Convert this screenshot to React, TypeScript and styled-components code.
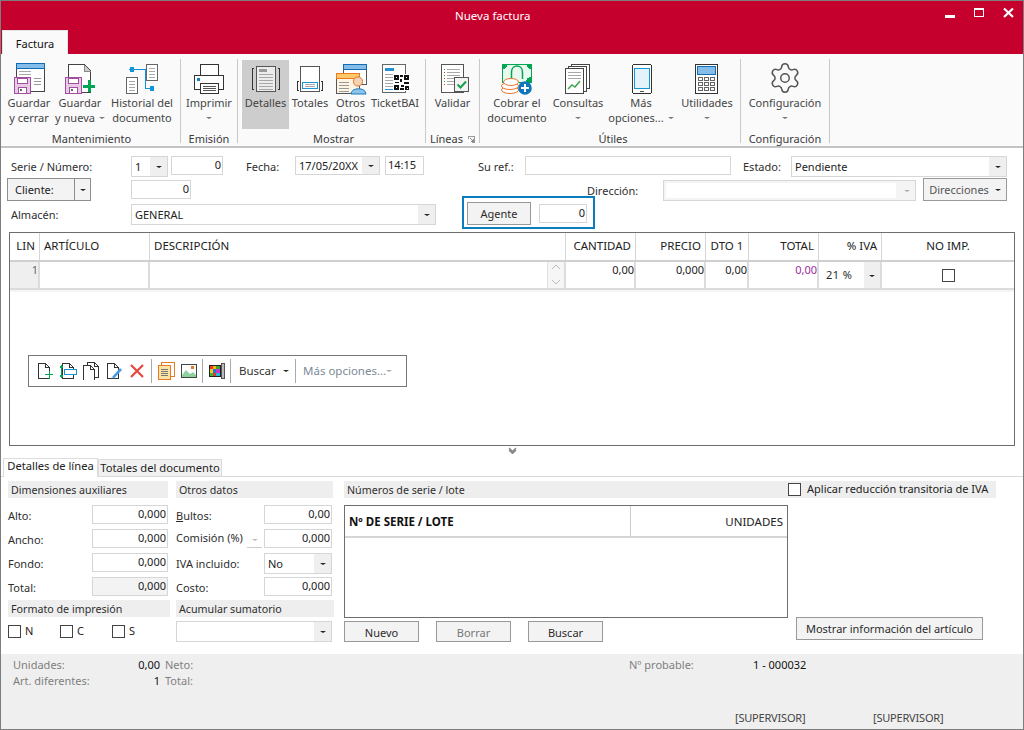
import React from "react";
import styled, { createGlobalStyle } from "styled-components";
import { Settings } from "lucide-react";

const Global = createGlobalStyle`
  html, body { margin: 0; padding: 0; width: 1024px; height: 730px; overflow: hidden; background: #fff; }
  * { box-sizing: border-box; }
  body { font-family: "Noto Sans", "Open Sans", sans-serif; font-size: 11px; color: #2b2b2b; }
`;

const Win = styled.div`
  width: 1024px; height: 730px; border: 1px solid #7d7d7d; display: flex; flex-direction: column; background: #fff;
`;
const TitleBar = styled.header`
  height: 53px; flex: none; background: #c6002d; display: flex; flex-direction: column; position: relative;
`;
const TitleRow = styled.div`
  display: grid; grid-template-columns: 454px auto 1fr; height: 29px; align-items: start; color: #fff;
`;
const TitleText = styled.div`
  grid-column: 2; font-size: 11.5px; line-height: 29px; color: #fff;
`;
const Controls = styled.div`
  grid-column: 3; justify-self: end; display: flex; gap: 19px; padding: 6px 9px 0 0;
`;
const TabRow = styled.div` display: flex; padding-left: 1px; height: 24px; `;
const RibbonTab = styled.div`
  width: 66px; height: 24px; background: #fafafa; border: 1px solid #e4e4e4; border-bottom: 0; text-align: center; line-height: 25px; color: #111; font-size: 11px;
`;

const Ribbon = styled.nav`
  height: 94px; flex: none; background: #fafafa; border-bottom: 2px solid #c4c4c4; display: flex; padding-top: 5px;
`;
const Group = styled.section<{ $w: number; $pl?: number }>`
  width: ${p => p.$w}px; height: 84px; flex: none; border-right: 1px solid #c9c9c9; padding-left: ${p => p.$pl ?? 0}px;
  display: flex; flex-direction: column;
`;
const GroupBtns = styled.div` display: flex; height: 72px; flex: none; `;
const GroupLabel = styled.div`
  line-height: 16px; text-align: center; color: #3a3a3a; white-space: nowrap; display: flex; justify-content: center; align-items: center; gap: 5px;
`;
const RibbonBtn = styled.button<{ $w: number; $on?: boolean }>`
  all: unset; box-sizing: border-box; width: ${p => p.$w}px; height: 69px; margin-top: 1px; flex: none; display: flex; flex-direction: column; align-items: center;
  background: ${p => (p.$on ? "#cdcdcd" : "transparent")}; color: #444; font-size: 11px; line-height: 15px; text-align: center; white-space: nowrap;
  svg { flex: none; margin-bottom: -1px; }
`;
const BtnLine = styled.span` display: flex; align-items: center; justify-content: center; gap: 4px; height: 15px; `;
const Caret = styled.i<{ $c?: string; $s?: number }>`
  display: inline-block; width: 0; height: 0; flex: none;
  border-left: ${p => p.$s ?? 3}px solid transparent; border-right: ${p => p.$s ?? 3}px solid transparent; border-top: ${p => (p.$s ?? 3) - 0.5}px solid ${p => p.$c ?? "#777"};
`;

const FormArea = styled.section`
  height: 84px; flex: none; padding: 8px 0 0 6px; display: flex; flex-direction: column;
`;
const FormRow = styled.div<{ $h: number }>` display: flex; height: ${p => p.$h}px; align-items: flex-start; `;
const Lbl = styled.label<{ $w: number; $ml?: number; $lh?: number; $pl?: number }>`
  width: ${p => p.$w}px; flex: none; margin-left: ${p => p.$ml ?? 0}px; padding-left: ${p => p.$pl ?? 0}px; line-height: ${p => p.$lh ?? 22}px; color: #2e2e2e; white-space: nowrap;
`;
const Field = styled.div<{ $w: number; $h?: number; $ml?: number; $mt?: number; $left?: boolean; $bg?: string }>`
  width: ${p => p.$w}px; height: ${p => p.$h ?? 19}px; flex: none; margin-left: ${p => p.$ml ?? 0}px; margin-top: ${p => p.$mt ?? 0}px;
  border: 1px solid #d6d6d6; background: ${p => p.$bg ?? "#fff"}; color: #222; padding: 0 1px 0 2px; line-height: 15px; text-align: ${p => (p.$left ? "left" : "right")}; white-space: nowrap;
`;
const Sel = styled.div<{ $w: number; $h?: number; $ml?: number; $mt?: number; $arrow?: number; $off?: boolean }>`
  width: ${p => p.$w}px; height: ${p => p.$h ?? 21}px; flex: none; margin-left: ${p => p.$ml ?? 0}px; margin-top: ${p => p.$mt ?? 0}px;
  border: 1px solid #d6d6d6; background: ${p => (p.$off ? "#f4f4f4" : "#fff")}; display: flex; color: #222;
  span { flex: 1; padding-left: 3px; line-height: ${p => (p.$h ?? 21) - 2}px; margin: ${p => (p.$off ? "2px" : "0")}; background: #fff; }
  b { width: ${p => p.$arrow ?? 17}px; flex: none; background: ${p => (p.$off ? "#f4f4f4" : "#efefef")}; display: flex; align-items: center; justify-content: center; }
`;
const MiniSel = styled.div`
  width: 15px; height: 19px; margin-right: 2px; flex: none; border-bottom: 1px solid #ccc; display: flex; align-items: center; justify-content: center; padding-top: 3px;
`;
const PlainBtn = styled.button<{ $w: number; $h: number; $ml?: number; $mt?: number; $off?: boolean; $soft?: boolean; $pt?: number; $gap?: number }>`
  all: unset; box-sizing: border-box; width: ${p => p.$w}px; height: ${p => p.$h}px; flex: none; margin-left: ${p => p.$ml ?? 0}px; margin-top: ${p => p.$mt ?? 0}px; padding-top: ${p => p.$pt ?? 0}px;
  border: 1px solid #999; background: #f3f3f3; color: ${p => (p.$off ? "#777" : p.$soft ? "#555" : "#2b2b2b")}; text-align: center; line-height: 15px; white-space: nowrap;
  display: flex; align-items: center; justify-content: center; gap: ${p => p.$gap ?? 7}px; font-size: 11px;
`;
const SplitBtn = styled.div`
  width: 84px; height: 23px; flex: none; border: 1px solid #8e8e8e; background: #f3f3f3; display: flex; line-height: 21px; color: #222;
  span { width: 67px; padding-left: 7px; border-right: 1px solid #8e8e8e; }
  b { flex: 1; display: flex; align-items: center; justify-content: center; }
`;
const Highlight = styled.div`
  width: 133px; height: 33px; margin: -6px 0 0 26px; flex: none; border: 2px solid #0a7dbf; display: flex; align-items: flex-start; padding: 4px 0 0 3px; background: #fff;
`;

const TableBox = styled.section`
  height: 214px; flex: none; margin: 0 8px; width: 1006px; border: 1px solid #6e6e6e; position: relative;
`;
const Cols = "30px 110px 416px 70px 70px 43px 70px 63px 132px";
const HeadRow = styled.div`
  display: grid; grid-template-columns: ${Cols}; height: 29px; border-bottom: 2px solid #cfcfcf;
`;
const Th = styled.div<{ $a?: string }>`
  border-right: 1px solid #d6d6d6; text-align: ${p => p.$a ?? "right"}; padding: 0 4px 0 4px; line-height: 25px; color: #222; font-size: 11.5px; white-space: nowrap;
  &:last-child { border-right: 0; }
`;
const DataRow = styled.div`
  display: grid; grid-template-columns: ${Cols}; height: 28px; border-bottom: 2px solid #dcdcdc; box-shadow: 0 2px 0 #f5f5f5;
`;
const Td = styled.div<{ $bg?: string; $c?: string }>`
  border-right: 2px solid #dcdcdc; background: ${p => p.$bg ?? "#fff"}; color: ${p => p.$c ?? "#222"}; text-align: right; padding-right: 0; line-height: 16px; white-space: nowrap;
  &:last-child { border-right: 0; }
`;
const DescCell = styled.div`
  display: flex; border-right: 2px solid #dcdcdc;
  div:first-child { width: 398px; border-right: 1px solid #e0e0e0; }
  div:last-child { flex: 1; background: #f6f6f6; display: flex; align-items: center; justify-content: center; }
`;
const IvaCell = styled.div`
  display: flex; border-right: 2px solid #dcdcdc;
  span { flex: 1; padding: 5px 0 0 7px; line-height: 15px; letter-spacing: 0.4px; }
  b { width: 16px; background: #efefef; display: flex; align-items: center; justify-content: center; padding-top: 2px; }
`;
const CheckCell = styled.div` display: flex; align-items: center; justify-content: center; padding: 1px 0 0 0; `;
const Check = styled.i` display: block; width: 13px; height: 13px; border: 1px solid #444; background: #fff; flex: none; `;

const FloatBar = styled.div`
  position: absolute; left: 18px; top: 122px; width: 379px; height: 32px; background: #fff; border: 1px solid #777; display: flex; align-items: center; padding-left: 4px;
`;
const ToolBtn = styled.span` width: 23px; height: 18px; display: flex; justify-content: center; flex: none; `;
const ToolSep = styled.i<{ $l?: number; $r?: number }>` width: 1px; height: 24px; background: #aaa; margin: 0 ${p => p.$r ?? 2}px 0 ${p => p.$l ?? 2}px; flex: none; `;
const ToolText = styled.span<{ $w: number; $pl: number; $off?: boolean }>`
  width: ${p => p.$w}px; flex: none; padding-left: ${p => p.$pl}px; display: flex; align-items: center; justify-content: space-between; padding-right: 6px; white-space: nowrap;
  color: ${p => (p.$off ? "#7b8a96" : "#333")}; line-height: 15px; font-size: 11.5px; height: 15px; margin-top: -2px;
  i { margin-top: 2px; }
`;

const Collapse = styled.div` height: 12px; flex: none; display: flex; justify-content: center; align-items: flex-start; padding-top: 1px; `;
const DetailTabs = styled.div`
  height: 19px; flex: none; border-bottom: 1px solid #d8d8d8; display: flex; align-items: flex-end; padding-left: 2px;
`;
const DetailTab = styled.div<{ $on?: boolean }>`
  height: ${p => (p.$on ? 19 : 17)}px; width: ${p => (p.$on ? 95 : 124)}px; border: 1px solid #dcdcdc; border-bottom: 0; background: ${p => (p.$on ? "#fff" : "#f1f1f1")};
  line-height: ${p => (p.$on ? 14 : 16)}px; text-align: center; color: #222; margin-bottom: ${p => (p.$on ? -1 : 0)}px; white-space: nowrap; position: relative; font-size: 11.2px;
`;

const Panels = styled.section` flex: 1; display: flex; padding: 4px 0 0 7px; `;
const Col = styled.div<{ $w: number; $ml?: number }>` width: ${p => p.$w}px; margin-left: ${p => p.$ml ?? 0}px; flex: none; display: flex; flex-direction: column; `;
const SectionHead = styled.div<{ $wide?: number }>`
  height: 17px; flex: none; background: #eeeeee; padding: 1px 3px 0; line-height: 16px; color: #2e2e2e; width: ${p => (p.$wide ? `${p.$wide}px` : "100%")}; white-space: nowrap; display: flex; align-items: center; justify-content: space-between; font-size: 10.7px;
`;
const Stack = styled.div` display: flex; flex-direction: column; gap: 5px; margin: 7px 0 4px; `;
const PanelRow = styled.div` display: flex; height: 19px; align-items: flex-start; `;
const CheckRow = styled.div` display: flex; margin-top: 7px; `;
const CheckItem = styled.label<{ $w?: number; $gap?: number; $fs?: number; $mt?: number }>`
  width: ${p => p.$w ?? 52}px; display: flex; align-items: center; gap: ${p => p.$gap ?? 4}px; line-height: 14px; color: #222; white-space: nowrap; font-size: ${p => p.$fs ?? 11}px; margin-top: ${p => p.$mt ?? 0}px;
`;
const SeriesBody = styled.div` display: flex; margin-top: 7px; height: 137px; `;
const SeriesLeft = styled.div` width: 444px; flex: none; display: flex; flex-direction: column; `;
const SeriesTable = styled.div` height: 113px; border: 1px solid #6e6e6e; flex: none; `;
const SeriesHead = styled.div`
  display: grid; grid-template-columns: 286px 1fr; height: 32px; border-bottom: 2px solid #d6d6d6; line-height: 31px;
`;
const SeriesTh = styled.div<{ $bold?: boolean }>`
  padding: 0 4px; font-size: 11.5px; font-weight: ${p => (p.$bold ? 700 : 400)}; text-align: ${p => (p.$bold ? "left" : "right")}; color: ${p => (p.$bold ? "#111" : "#222")}; border-right: ${p => (p.$bold ? "1px solid #ccc" : "0")};
`;
const SeriesBtns = styled.div` display: flex; gap: 17px; margin-top: 3px; `;

const Footer = styled.footer`
  height: 75px; flex: none; background: #efefef; display: flex; flex-direction: column; padding: 3px 0 4px 12px;
`;
const FootTop = styled.div` display: flex; `;
const FootGrid = styled.div<{ $cols: string; $ml?: number }>`
  display: grid; grid-template-columns: ${p => p.$cols}; margin-left: ${p => p.$ml ?? 0}px; line-height: 16px; align-content: start;
`;
const Muted = styled.span` color: #808080; white-space: nowrap; `;
const Val = styled.span<{ $r?: boolean }>` color: #111; text-align: ${p => (p.$r ? "right" : "left")}; white-space: nowrap; `;
const FootBottom = styled.div` margin-top: auto; display: flex; padding-left: 722px; `;
const Who = styled.span` width: 138px; color: #444; line-height: 14px; white-space: nowrap; letter-spacing: -0.2px; `;

/* ---------- icons ---------- */
const Ico: React.FC<{ children: React.ReactNode }> = ({ children }) => (
  <svg width="40" height="36" viewBox="0 0 40 36" fill="none" shapeRendering="crispEdges">{children}</svg>
);
const Floppy = () => (
  <g>
    <rect x="5.5" y="17.5" width="16" height="16" fill="#e9c9e6" stroke="#a04fa0" />
    <rect x="8.5" y="18" width="10" height="5.5" fill="#fff" stroke="#a04fa0" />
    <rect x="9.5" y="27.5" width="8" height="6" fill="#fff" stroke="#a04fa0" />
    <rect x="11" y="29" width="2" height="2" fill="#666" />
  </g>
);
const DocLines: React.FC<{ x: number; y: number; w: number; n: number; gap?: number; c?: string }> = ({ x, y, w, n, gap = 3, c = "#a8a8a8" }) => (
  <g>{Array.from({ length: n }).map((_, i) => <rect key={i} x={x} y={y + i * gap} width={w} height="1" fill={c} />)}</g>
);
const IconSaveClose = () => (
  <Ico>
    <rect x="7.5" y="3.5" width="28" height="28" fill="#fff" stroke="#444" />
    <rect x="7.5" y="3.5" width="28" height="5" fill="#86bde8" stroke="#0f6cb5" />
    <DocLines x={10} y={11} w={12} n={2} gap={3} />
    <rect x="25" y="18" width="7" height="1" fill="#999" /><rect x="25" y="21" width="7" height="1" fill="#999" /><rect x="25" y="24" width="7" height="1" fill="#999" />
    <Floppy />
  </Ico>
);
const IconSaveNew = () => (
  <Ico>
    <path d="M8.5 4.5H24.5L30.5 11V32H8.5Z" fill="#fff" stroke="#444" />
    <path d="M24.5 4.5V11H30.5" fill="#ccc" stroke="#888" />
    <Floppy />
    <rect x="23" y="24.5" width="12" height="3" fill="#00a651" /><rect x="27.5" y="20" width="3" height="12" fill="#00a651" />
  </Ico>
);
const IconHistory = () => (
  <Ico>
    <path d="M10 9.5H23.5V28.5H30" stroke="#1195d8" />
    <circle cx="10" cy="9.5" r="2.5" fill="#1195d8" /><circle cx="30" cy="28.5" r="2.5" fill="#1195d8" />
    <rect x="24.5" y="4.5" width="11" height="16" fill="#fff" stroke="#666" /><DocLines x={27} y={8} w={6} n={4} />
    <rect x="4.5" y="17.5" width="11" height="16" fill="#fff" stroke="#666" /><DocLines x={7} y={21} w={6} n={4} />
  </Ico>
);
const IconPrint = () => (
  <Ico>
    <rect x="11.5" y="4.5" width="18" height="11" fill="#fff" stroke="#333" />
    <rect x="5.5" y="15.5" width="29" height="14" fill="#fff" stroke="#333" />
    <rect x="8" y="18" width="3" height="3" fill="#0f7cc4" />
    <rect x="11.5" y="23.5" width="18" height="10" fill="#fff" stroke="#333" /><DocLines x={14} y={26} w={13} n={3} gap={2} c="#555" />
  </Ico>
);
const Brackets: React.FC<{ y: number; h: number; l: number; r: number }> = ({ y, h, l, r }) => (
  <g stroke="#333">
    <path d={`M${l + 2} ${y + 0.5}H${l + 0.5}V${y + h - 0.5}H${l + 2}`} />
    <path d={`M${r - 2} ${y + 0.5}H${r - 0.5}V${y + h - 0.5}H${r - 2}`} />
  </g>
);
const IconDetails = () => (
  <Ico>
    <Brackets y={8} h={22} l={6} r={34} />
    <rect x="10.5" y="6.5" width="19" height="25" fill="#ececec" stroke="#555" />
    <rect x="13" y="9" width="8" height="3" fill="#999" /><DocLines x={13} y={14} w={14} n={6} />
  </Ico>
);
const IconTotals = () => (
  <Ico>
    <Brackets y={21} h={10} l={7} r={33} />
    <rect x="10.5" y="6.5" width="19" height="25" fill="#fff" stroke="#555" />
    <rect x="12.5" y="22.5" width="15" height="6" fill="#fff" stroke="#1795d5" /><DocLines x={15} y={24} w={10} n={2} gap={2} />
  </Ico>
);
const IconOther = () => (
  <Ico>
    <rect x="12.5" y="4.5" width="23" height="20" fill="#fff" stroke="#555" />
    <rect x="12.5" y="4.5" width="23" height="4.5" fill="#86bde8" stroke="#0f6cb5" />
    <rect x="5.5" y="13.5" width="23" height="20" fill="#fdf4e3" stroke="#555" />
    <rect x="5.5" y="13.5" width="23" height="4.5" fill="#fbc96a" stroke="#ea7a22" />
    <DocLines x={8} y={22} w={10} n={4} c="#999" />
    <g shapeRendering="auto">
      <path d="M20 34C20 27 35 27 35 34Z" fill="#8ec4ec" stroke="#1a7abf" />
      <circle cx="27" cy="21.5" r="4.6" fill="#f6d2b0" stroke="#d87a3a" />
    </g>
  </Ico>
);
const IconTicket = () => (
  <Ico>
    <rect x="7.5" y="4.5" width="23" height="28" fill="#fff" stroke="#666" />
    <rect x="10" y="8" width="9" height="3" fill="#2a8fd0" /><DocLines x={10} y={14} w={8} n={5} /><rect x="10" y="29" width="8" height="1" fill="#2a8fd0" />
    <rect x="18" y="14" width="17" height="17" fill="#fff" />
    <g fill="#111">
      <path d="M19 15h5v5h-5zM29 15h5v5h-5zM19 25h5v5h-5z" fillRule="evenodd" />
      <rect x="25" y="15" width="3" height="2" /><rect x="25" y="19" width="2" height="3" /><rect x="29" y="22" width="5" height="2" /><rect x="20" y="22" width="4" height="1" />
      <rect x="26" y="25" width="3" height="2" /><rect x="30" y="26" width="4" height="4" /><rect x="25" y="28" width="4" height="2" />
    </g>
    <g fill="#fff"><rect x="21" y="17" width="1" height="1" /><rect x="31" y="17" width="1" height="1" /><rect x="21" y="27" width="1" height="1" /><rect x="32" y="28" width="1" height="1" /></g>
  </Ico>
);
const IconValidate = () => (
  <Ico>
    <rect x="8.5" y="4.5" width="22" height="28" fill="#fff" stroke="#555" />
    <DocLines x={14} y={9} w={13} n={6} />
    <g>{[9, 12, 15, 18, 21, 24].map((y, i) => <rect key={y} x="11" y={y} width="1" height="1" fill={i % 2 ? "#c33" : "#2a2"} />)}</g>
    <rect x="21.5" y="17.5" width="14" height="14" fill="#f3f3f3" stroke="#555" />
    <path d="M24.5 24.5L27.5 27.5L33 21.5" stroke="#15a04a" strokeWidth="2" shapeRendering="auto" />
  </Ico>
);
const IconCharge = () => (
  <Ico>
    <rect x="5.5" y="4.5" width="29" height="18" fill="#eaf8ef" stroke="#00a651" />
    <path d="M5.5 9.5a5 5 0 0 0 5-5h-5zM34.5 9.5a5 5 0 0 1-5-5h5zM29 22a5 5 0 0 1 5-5v5z" fill="#00a651" />
    <path d="M14.5 19V12C14.5 4 25.5 4 25.5 12V19" stroke="#00a651" strokeWidth="1.5" shapeRendering="auto" />
    <g stroke="#e8762c" fill="#fff" shapeRendering="auto">
      <ellipse cx="13" cy="30" rx="8.5" ry="3.5" /><ellipse cx="13" cy="26" rx="8.5" ry="3.5" /><ellipse cx="14" cy="22" rx="7.5" ry="3.5" />
    </g>
    <circle cx="28" cy="28" r="6.8" fill="#0f76bd" shapeRendering="auto" />
    <rect x="24" y="27.3" width="8" height="1.5" fill="#fff" /><rect x="27.3" y="24" width="1.5" height="8" fill="#fff" />
  </Ico>
);
const IconQueries = () => (
  <Ico>
    <rect x="13.5" y="4.5" width="18" height="24" fill="#fff" stroke="#444" />
    <rect x="10.5" y="6.5" width="18" height="25" fill="#fff" stroke="#444" />
    <rect x="7.5" y="8.5" width="18" height="25" fill="#fff" stroke="#444" />
    <DocLines x={10} y={12} w={13} n={3} />
    <path d="M10 29L14 25L17 27L22 21" stroke="#3aa84a" strokeWidth="1.5" shapeRendering="auto" />
  </Ico>
);
const IconPhone = () => (
  <Ico>
    <rect x="11.5" y="4.5" width="19" height="29" rx="2" fill="#fff" stroke="#333" />
    <rect x="13.5" y="8.5" width="15" height="20" fill="#e4f2fb" stroke="#1795d5" />
    <rect x="19" y="31" width="4" height="1" fill="#555" />
  </Ico>
);
const IconCalc = () => (
  <Ico>
    <rect x="8.5" y="4.5" width="22" height="29" fill="#fff" stroke="#333" />
    <rect x="10.5" y="6.5" width="18" height="8" fill="#86bde8" stroke="#0f6cb5" />
    {[17, 22, 27].map(y => [11, 17, 23].map(x => <rect key={`${x}-${y}`} x={x + 0.5} y={y + 0.5} width="4" height="3" stroke="#666" fill="#fff" />))}
  </Ico>
);
const IconGear = () => (
  <svg width="40" height="36" viewBox="0 0 40 36" fill="none">
    <Settings x={3} y={1} width={34} height={34} strokeWidth={1.05} color="#555" />
  </svg>
);
const Mini: React.FC<{ children: React.ReactNode }> = ({ children }) => (
  <svg width="18" height="18" viewBox="0 0 18 18" fill="none" shapeRendering="crispEdges">{children}</svg>
);
const MiniDoc: React.FC<{ x?: number; y?: number }> = ({ x = 0, y = 0 }) => (
  <path d={`M${x + 2.5} ${y + 1.5}H${x + 9.5}L${x + 13.5} ${y + 5.5}V${y + 16.5}H${x + 2.5}ZM${x + 9.5} ${y + 1.5}V${y + 5.5}H${x + 13.5}`} stroke="#333" fill="#fff" />
);
const TNew = () => <Mini><MiniDoc /><rect x="9" y="12" width="8" height="1" fill="#00a651" /><rect x="12.5" y="8.5" width="1" height="8" fill="#00a651" /></Mini>;
const TInsert = () => <Mini><MiniDoc x={1} /><path d="M2.5 4V15M1 5.5L2.5 3.5L4 5.5M1 13.5L2.5 15.5L4 13.5" stroke="#00a651" /><rect x="5.5" y="7.5" width="12" height="5" fill="#fff" stroke="#1795d5" /></Mini>;
const TCopy = () => <Mini><MiniDoc x={3} y={-1} /><MiniDoc x={-1} y={2} /></Mini>;
const TEdit = () => <Mini><MiniDoc /><path d="M7 15L15 6L17 8L9 16.5Z" fill="#4a9be0" shapeRendering="auto" /></Mini>;
const TDelete = () => <Mini><path d="M3 3L15 15M15 3L3 15" stroke="#e8473f" strokeWidth="2.2" shapeRendering="auto" /></Mini>;
const TNotes = () => <Mini><rect x="4.5" y="0.5" width="13" height="14" fill="#fff" stroke="#ea7a22" /><rect x="1.5" y="3.5" width="12" height="14" fill="#fbe3a8" stroke="#ea7a22" /><DocLines x={4} y={7} w={7} n={4} gap={2} c="#777" /></Mini>;
const TImage = () => <Mini><rect x="1.5" y="2.5" width="15" height="13" fill="#fff" stroke="#444" /><path d="M2 13L6 8L10 12L13 10L16 13V15H2Z" fill="#8fd19e" shapeRendering="auto" /><rect x="11" y="4" width="3" height="3" fill="#ea7a22" /></Mini>;
const TColors = () => (
  <Mini>
    <rect x="1" y="3" width="12" height="12" fill="#222" />
    <rect x="2" y="4" width="3" height="3" fill="#e33" /><rect x="5" y="4" width="3" height="3" fill="#fb0" /><rect x="8" y="4" width="4" height="3" fill="#3a3" />
    <rect x="2" y="7" width="3" height="4" fill="#ec2" /><rect x="5" y="7" width="3" height="4" fill="#27c" /><rect x="8" y="7" width="4" height="4" fill="#c3c" />
    <rect x="2" y="11" width="3" height="3" fill="#3b3" /><rect x="5" y="11" width="3" height="3" fill="#e33" /><rect x="8" y="11" width="4" height="3" fill="#2bd" />
    <rect x="13.5" y="1.5" width="3" height="15" fill="#bbb" stroke="#555" />
  </Mini>
);
const GroupCorner = () => (
  <svg width="7" height="7" viewBox="0 0 7 7" fill="none" shapeRendering="crispEdges"><path d="M0.5 3V0.5H6.5V6.5H3.5" stroke="#999" /><path d="M2 2L5 5M5 3V5H3" stroke="#888" /></svg>
);

const Arrow = () => <Caret $c="#222" />;

const RBtn: React.FC<{ w: number; on?: boolean; icon: React.ReactNode; l1: React.ReactNode; l2?: React.ReactNode }> = ({ w, on, icon, l1, l2 }) => (
  <RibbonBtn $w={w} $on={on}>
    {icon}
    <BtnLine>{l1}</BtnLine>
    {l2 !== undefined && <BtnLine>{l2}</BtnLine>}
  </RibbonBtn>
);

export default function App() {
  return (
    <Win>
      <Global />
      <TitleBar>
        <TitleRow>
          <TitleText>Nueva factura</TitleText>
          <Controls>
            <svg width="10" height="11" viewBox="0 0 10 11" shapeRendering="crispEdges"><rect y="8" width="10" height="3" fill="#fff" /></svg>
            <svg width="10" height="11" viewBox="0 0 10 11" fill="none" shapeRendering="crispEdges"><rect x="0.5" y="1.5" width="9" height="8" stroke="#fff" /><rect y="1" width="10" height="2" fill="#fff" /></svg>
            <svg width="11" height="11" viewBox="0 0 11 11" fill="none"><path d="M1 1.5L10 10M10 1.5L1 10" stroke="#fff" strokeWidth="2.2" /></svg>
          </Controls>
        </TitleRow>
        <TabRow><RibbonTab>Factura</RibbonTab></TabRow>
      </TitleBar>

      <Ribbon>
        <Group $w={180} $pl={2}>
          <GroupBtns>
            <RBtn w={52} icon={<IconSaveClose />} l1="Guardar" l2="y cerrar" />
            <RBtn w={50} icon={<IconSaveNew />} l1="Guardar" l2={<>y nueva <Caret /></>} />
            <RBtn w={74} icon={<IconHistory />} l1="Historial del" l2="documento" />
          </GroupBtns>
          <GroupLabel>Mantenimiento</GroupLabel>
        </Group>
        <Group $w={57}>
          <GroupBtns><RBtn w={56} icon={<IconPrint />} l1="Imprimir" l2={<Caret />} /></GroupBtns>
          <GroupLabel>Emisión</GroupLabel>
        </Group>
        <Group $w={188} $pl={4}>
          <GroupBtns>
            <RBtn w={47} on icon={<IconDetails />} l1="Detalles" />
            <RBtn w={42} icon={<IconTotals />} l1="Totales" />
            <RBtn w={39} icon={<IconOther />} l1="Otros" l2="datos" />
            <RBtn w={50} icon={<IconTicket />} l1="TicketBAI" />
          </GroupBtns>
          <GroupLabel>Mostrar</GroupLabel>
        </Group>
        <Group $w={54}>
          <GroupBtns><RBtn w={53} icon={<IconValidate />} l1="Validar" /></GroupBtns>
          <GroupLabel>Líneas <GroupCorner /></GroupLabel>
        </Group>
        <Group $w={261} $pl={6}>
          <GroupBtns>
            <RBtn w={62} icon={<IconCharge />} l1="Cobrar el" l2="documento" />
            <RBtn w={60} icon={<IconQueries />} l1="Consultas" l2={<Caret />} />
            <RBtn w={66} icon={<IconPhone />} l1="Más" l2={<>opciones... <Caret /></>} />
            <RBtn w={66} icon={<IconCalc />} l1="Utilidades" l2={<Caret />} />
          </GroupBtns>
          <GroupLabel>Útiles</GroupLabel>
        </Group>
        <Group $w={89}>
          <GroupBtns><RBtn w={88} icon={<IconGear />} l1="Configuración" l2={<Caret />} /></GroupBtns>
          <GroupLabel>Configuración</GroupLabel>
        </Group>
      </Ribbon>

      <FormArea>
        <FormRow $h={22}>
          <Lbl $w={124} $pl={4}>Serie / Número:</Lbl>
          <Sel $w={37} $h={21}><span>1</span><b><Arrow /></b></Sel>
          <Field $w={52} $ml={3}>0</Field>
          <Lbl $w={49} $ml={23}>Fecha:</Lbl>
          <Sel $w={85} $h={19}><span>17/05/20XX</span><b><Arrow /></b></Sel>
          <Field $w={39} $ml={5} $left>14:15</Field>
          <Lbl $w={47} $ml={54}>Su ref.:</Lbl>
          <Field $w={206} />
          <Lbl $w={48} $ml={12}>Estado:</Lbl>
          <Sel $w={216}><span>Pendiente</span><b><Arrow /></b></Sel>
        </FormRow>
        <FormRow $h={24}>
          <SplitBtn><span>Cliente:</span><b><Arrow /></b></SplitBtn>
          <Field $w={60} $ml={40} $mt={2}>0</Field>
          <Lbl $w={76} $ml={396} $lh={26}>Dirección:</Lbl>
          <Sel $w={253} $mt={2} $off><span /><b><Caret $c="#aaa" /></b></Sel>
          <PlainBtn $w={84} $h={23} $ml={7} $soft $gap={6}>Direcciones <Arrow /></PlainBtn>
        </FormRow>
        <FormRow $h={27}>
          <Lbl $w={124} $pl={4} $lh={26}>Almacén:</Lbl>
          <Sel $w={305} $mt={2}><span>GENERAL</span><b><Arrow /></b></Sel>
          <Highlight>
            <PlainBtn $w={64} $h={23}>Agente</PlainBtn>
            <Field $w={48} $ml={8} $mt={2}>0</Field>
          </Highlight>
        </FormRow>
      </FormArea>

      <TableBox>
        <HeadRow>
          <Th>LIN</Th><Th $a="left">ARTÍCULO</Th><Th $a="left">DESCRIPCIÓN</Th><Th>CANTIDAD</Th><Th>PRECIO</Th><Th $a="center">DTO 1</Th><Th>TOTAL</Th><Th>% IVA</Th><Th $a="center">NO IMP.</Th>
        </HeadRow>
        <DataRow>
          <Td $bg="#efefef" $c="#666">1</Td>
          <Td />
          <DescCell>
            <div />
            <div>
              <svg width="10" height="24" viewBox="0 0 10 24" fill="none" stroke="#bbb"><path d="M1 6L5 2L9 6M1 17L5 21L9 17" /></svg>
            </div>
          </DescCell>
          <Td>0,00</Td><Td>0,000</Td><Td>0,00</Td>
          <Td $c="#9a2fa0">0,00</Td>
          <IvaCell><span>21 %</span><b><Arrow /></b></IvaCell>
          <CheckCell><Check /></CheckCell>
        </DataRow>
        <FloatBar>
          <ToolBtn><TNew /></ToolBtn><ToolBtn><TInsert /></ToolBtn><ToolBtn><TCopy /></ToolBtn><ToolBtn><TEdit /></ToolBtn><ToolBtn><TDelete /></ToolBtn>
          <ToolSep $l={3} />
          <ToolBtn><TNotes /></ToolBtn><ToolBtn><TImage /></ToolBtn>
          <ToolSep />
          <ToolBtn><TColors /></ToolBtn>
          <ToolSep $r={0} />
          <ToolText $w={64} $pl={8}>Buscar <Caret $c="#222" /></ToolText>
          <ToolSep $l={0} $r={0} />
          <ToolText $w={100} $pl={7} $off>Más opciones... <Caret $c="#aaa" /></ToolText>
        </FloatBar>
      </TableBox>

      <Collapse>
        <svg width="9" height="7" viewBox="0 0 9 7" fill="none" stroke="#888" strokeWidth="1.4"><path d="M1 1L4.5 4.5L8 1M1 3L4.5 6.5L8 3" /></svg>
      </Collapse>
      <DetailTabs>
        <DetailTab $on>Detalles de línea</DetailTab>
        <DetailTab>Totales del documento</DetailTab>
      </DetailTabs>

      <Panels>
        <Col $w={160}>
          <SectionHead>Dimensiones auxiliares</SectionHead>
          <Stack>
            <PanelRow><Lbl $w={84} $lh={21}>Alto:</Lbl><Field $w={76}>0,000</Field></PanelRow>
            <PanelRow><Lbl $w={84} $lh={21}>Ancho:</Lbl><Field $w={76}>0,000</Field></PanelRow>
            <PanelRow><Lbl $w={84} $lh={21}>Fondo:</Lbl><Field $w={76}>0,000</Field></PanelRow>
            <PanelRow><Lbl $w={84} $lh={21}>Total:</Lbl><Field $w={76} $bg="#f3f3f3">0,000</Field></PanelRow>
          </Stack>
          <SectionHead $wide={162}>Formato de impresión</SectionHead>
          <CheckRow>
            <CheckItem><Check />N</CheckItem>
            <CheckItem><Check />C</CheckItem>
            <CheckItem><Check />S</CheckItem>
          </CheckRow>
        </Col>
        <Col $w={157} $ml={8}>
          <SectionHead>Otros datos</SectionHead>
          <Stack>
            <PanelRow><Lbl $w={88} $lh={21}><u>B</u>ultos:</Lbl><Field $w={68}>0,00</Field></PanelRow>
            <PanelRow>
              <Lbl $w={71} $lh={17}>Comisión (%)</Lbl>
              <MiniSel><Caret $c="#bbb" /></MiniSel>
              <Field $w={68}>0,000</Field>
            </PanelRow>
            <PanelRow><Lbl $w={88} $lh={21}>IVA incluido:</Lbl><Sel $w={68}><span>No</span><b><Arrow /></b></Sel></PanelRow>
            <PanelRow><Lbl $w={88} $lh={21}>Costo:</Lbl><Field $w={68}>0,000</Field></PanelRow>
          </Stack>
          <SectionHead $wide={158}>Acumular sumatorio</SectionHead>
          <Sel $w={156} $mt={4}><span /><b><Arrow /></b></Sel>
        </Col>
        <Col $w={652} $ml={11}>
          <SectionHead>
            Números de serie / lote
            <CheckItem $w={205} $gap={6} $fs={11} $mt={-2}><Check />Aplicar reducción transitoria de IVA</CheckItem>
          </SectionHead>
          <SeriesBody>
            <SeriesLeft>
              <SeriesTable>
                <SeriesHead>
                  <SeriesTh $bold>Nº DE SERIE / LOTE</SeriesTh>
                  <SeriesTh>UNIDADES</SeriesTh>
                </SeriesHead>
              </SeriesTable>
              <SeriesBtns>
                <PlainBtn $w={75} $h={21} $pt={2}>Nuevo</PlainBtn>
                <PlainBtn $w={75} $h={21} $pt={2} $off>Borrar</PlainBtn>
                <PlainBtn $w={75} $h={21} $pt={2}>Buscar</PlainBtn>
              </SeriesBtns>
            </SeriesLeft>
            <PlainBtn $w={187} $h={23} $ml={8} $mt={112}>Mostrar información del artículo</PlainBtn>
          </SeriesBody>
        </Col>
      </Panels>

      <Footer>
        <FootTop>
          <FootGrid $cols="100px 47px 5px 40px">
            <Muted>Unidades:</Muted><Val $r>0,00</Val><i /><Muted>Neto:</Muted>
            <Muted>Art. diferentes:</Muted><Val $r>1</Val><i /><Muted>Total:</Muted>
          </FootGrid>
          <FootGrid $cols="124px auto" $ml={424}>
            <Muted>Nº probable:</Muted><Val>1 - 000032</Val>
          </FootGrid>
        </FootTop>
        <FootBottom>
          <Who>[SUPERVISOR]</Who><Who>[SUPERVISOR]</Who>
        </FootBottom>
      </Footer>
    </Win>
  );
}
